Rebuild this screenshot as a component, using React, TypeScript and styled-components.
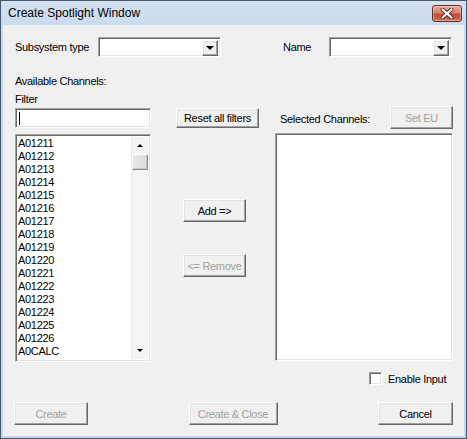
import React from 'react';
import styled, { createGlobalStyle } from 'styled-components';

const GlobalStyle = createGlobalStyle`
  html, body {
    margin: 0;
    padding: 0;
    background: #ffffff;
  }
  body {
    font-family: "Liberation Sans", Arial, sans-serif;
    font-size: 11px;
    letter-spacing: -0.3px;
    color: #000;
  }
  * {
    box-sizing: border-box;
  }
`;

const Window = styled.div`
  width: 467px;
  height: 439px;
  display: flex;
  flex-direction: column;
  border: 1px solid #46586c;
  background: linear-gradient(#d4e2f1, #c3d6ec 40px, #c3d6ec);
`;

const TitleBar = styled.div`
  height: 24px;
  display: flex;
  align-items: center;
  justify-content: space-between;
  padding: 0 4px 0 7px;
`;

const Title = styled.span`
  font-size: 12px;
  letter-spacing: 0;
  color: #000;
`;

const CloseButton = styled.div`
  width: 30px;
  height: 17px;
  margin-top: 1px;
  display: flex;
  align-items: center;
  justify-content: center;
  border: 1px solid #6b2a26;
  border-radius: 3px;
  background: linear-gradient(#e9a99c, #d8826f 45%, #c24a34 55%, #d0705b);
  box-shadow: inset 0 0 0 1px rgba(255, 255, 255, 0.35);
`;

const Client = styled.div`
  flex: 1;
  margin: 0 2px 2px;
  background: #f0f0f0;
  display: flex;
  flex-direction: column;
`;

const TopRow = styled.div`
  display: flex;
  align-items: center;
  height: 20px;
  margin-top: 12px;
  padding-left: 12px;
`;

const FieldLabel = styled.span<{ $w: number; $ml?: number }>`
  width: ${(p) => p.$w}px;
  margin-left: ${(p) => p.$ml ?? 0}px;
  white-space: nowrap;
`;

const sunken = `
  border: 1px solid;
  border-color: #a0a0a0 #ffffff #ffffff #a0a0a0;
  box-shadow: inset 1px 1px #696969, inset -1px -1px #e3e3e3;
  background: #ffffff;
`;

const raised = `
  border: 1px solid;
  border-color: #ffffff #696969 #696969 #ffffff;
  box-shadow: inset -1px -1px #a0a0a0, inset 1px 1px #e3e3e3;
  background: #f0f0f0;
`;

const Combo = styled.div<{ $w: number }>`
  ${sunken}
  width: ${(p) => p.$w}px;
  height: 20px;
  display: flex;
  justify-content: flex-end;
  padding: 2px;
`;

const DropButton = styled.div`
  ${raised}
  width: 16px;
  height: 16px;
  display: flex;
  align-items: center;
  justify-content: center;
`;

const Arrow = styled.span<{ $dir: 'up' | 'down'; $size: number; $color?: string }>`
  width: 0;
  height: 0;
  border-left: ${(p) => p.$size}px solid transparent;
  border-right: ${(p) => p.$size}px solid transparent;
  ${(p) =>
    p.$dir === 'down'
      ? `border-top: ${p.$size}px solid ${p.$color ?? '#000'};`
      : `border-bottom: ${p.$size}px solid ${p.$color ?? '#000'};`}
`;

const Body = styled.div`
  display: flex;
  margin-top: 18px;
  padding-left: 12px;
`;

const Column = styled.div<{ $w: number }>`
  width: ${(p) => p.$w}px;
  display: flex;
  flex-direction: column;
  align-items: flex-start;
`;

const Caption = styled.div<{ $mt?: number }>`
  line-height: 13px;
  margin-top: ${(p) => p.$mt ?? 0}px;
  white-space: nowrap;
`;

const TextInput = styled.div`
  ${sunken}
  width: 136px;
  height: 20px;
  margin-top: 2px;
  padding: 3px 0 0 3px;
`;

const Caret = styled.span`
  display: block;
  width: 1px;
  height: 13px;
  background: #000;
`;

const ListBox = styled.div<{ $w: number; $h: number; $mt: number }>`
  ${sunken}
  width: ${(p) => p.$w}px;
  height: ${(p) => p.$h}px;
  margin-top: ${(p) => p.$mt}px;
  padding: 2px;
  display: flex;
  overflow: hidden;
`;

const Items = styled.div`
  flex: 1;
  overflow: hidden;
`;

const Item = styled.div`
  line-height: 13px;
  height: 13px;
  white-space: nowrap;
`;

const ScrollBar = styled.div`
  width: 17px;
  display: flex;
  flex-direction: column;
  background: #f4f4f4;
  border-left: 1px solid #eaeaea;
`;

const ScrollArrow = styled.div<{ $end?: boolean }>`
  height: 17px;
  display: flex;
  align-items: center;
  justify-content: center;
  margin-top: ${(p) => (p.$end ? 'auto' : '0')};
`;

const Thumb = styled.div`
  height: 16px;
  border: 1px solid;
  border-color: #ffffff #8a8a8a #8a8a8a #ffffff;
  box-shadow: inset -1px -1px #c8c8c8;
  background: linear-gradient(90deg, #e6e6e6, #dcdcdc);
`;

const PushButton = styled.div<{ $w: number; $h: number; $mt?: number; $ml?: number; $disabled?: boolean }>`
  ${raised}
  width: ${(p) => p.$w}px;
  height: ${(p) => p.$h}px;
  margin-top: ${(p) => p.$mt ?? 0}px;
  margin-left: ${(p) => p.$ml ?? 0}px;
  display: flex;
  align-items: center;
  justify-content: center;
  color: ${(p) => (p.$disabled ? '#a0a0a0' : '#000')};
  white-space: nowrap;
  flex-shrink: 0;
`;

const HeaderRow = styled.div`
  width: 100%;
  display: flex;
  align-items: flex-end;
  justify-content: space-between;
  margin-top: 31px;
  padding-left: 5px;
`;

const HeaderLabel = styled.span`
  line-height: 13px;
  padding-bottom: 3px;
`;

const CheckRow = styled.label`
  display: flex;
  align-items: center;
  gap: 6px;
  margin: 10px 0 0 366px;
  height: 13px;
`;

const CheckBox = styled.span`
  ${sunken}
  width: 13px;
  height: 13px;
`;

const ButtonRow = styled.div`
  display: flex;
  justify-content: space-between;
  margin-top: 17px;
  padding: 0 11px;
`;

const channels = [
  'A01211', 'A01212', 'A01213', 'A01214', 'A01215', 'A01216', 'A01217', 'A01218', 'A01219',
  'A01220', 'A01221', 'A01222', 'A01223', 'A01224', 'A01225', 'A01226', 'A0CALC', 'A15411',
];

export default function App() {
  return (
    <>
      <GlobalStyle />
      <Window>
        <TitleBar>
          <Title>Create Spotlight Window</Title>
          <CloseButton>
            <svg width="14" height="11" viewBox="0 0 14 11">
              <path d="M2.5 1.5 L11.5 9.5 M11.5 1.5 L2.5 9.5" stroke="#5a2a25" strokeWidth="4" strokeLinecap="round" />
              <path d="M2.5 1.5 L11.5 9.5 M11.5 1.5 L2.5 9.5" stroke="#ffffff" strokeWidth="2.2" strokeLinecap="round" />
            </svg>
          </CloseButton>
        </TitleBar>
        <Client>
          <TopRow>
            <FieldLabel $w={83}>Subsystem type</FieldLabel>
            <Combo $w={123}>
              <DropButton>
                <Arrow $dir="down" $size={4} />
              </DropButton>
            </Combo>
            <FieldLabel $w={46} $ml={62}>Name</FieldLabel>
            <Combo $w={123}>
              <DropButton>
                <Arrow $dir="down" $size={4} />
              </DropButton>
            </Combo>
          </TopRow>

          <Body>
            <Column $w={136}>
              <Caption>Available Channels:</Caption>
              <Caption $mt={5}>Filter</Caption>
              <TextInput>
                <Caret />
              </TextInput>
              <ListBox $w={136} $h={228} $mt={6}>
                <Items>
                  {channels.map((c) => (
                    <Item key={c}>{c}</Item>
                  ))}
                </Items>
                <ScrollBar>
                  <ScrollArrow>
                    <Arrow $dir="up" $size={3} />
                  </ScrollArrow>
                  <Thumb />
                  <ScrollArrow $end>
                    <Arrow $dir="down" $size={3} />
                  </ScrollArrow>
                </ScrollBar>
              </ListBox>
            </Column>

            <Column $w={124}>
              <PushButton $w={83} $h={20} $mt={33} $ml={25}>Reset all filters</PushButton>
              <PushButton $w={63} $h={23} $mt={71} $ml={32}>Add =&gt;</PushButton>
              <PushButton $w={63} $h={23} $mt={32} $ml={32} $disabled>&lt;= Remove</PushButton>
            </Column>

            <Column $w={178}>
              <HeaderRow>
                <HeaderLabel>Selected Channels:</HeaderLabel>
                <PushButton $w={63} $h={23} $disabled>Set EU</PushButton>
              </HeaderRow>
              <ListBox $w={178} $h={228} $mt={4} />
            </Column>
          </Body>

          <CheckRow>
            <CheckBox />
            <span>Enable Input</span>
          </CheckRow>

          <ButtonRow>
            <PushButton $w={74} $h={23} $disabled>Create</PushButton>
            <PushButton $w={89} $h={23} $disabled>Create &amp; Close</PushButton>
            <PushButton $w={75} $h={23}>Cancel</PushButton>
          </ButtonRow>
        </Client>
      </Window>
    </>
  );
}
